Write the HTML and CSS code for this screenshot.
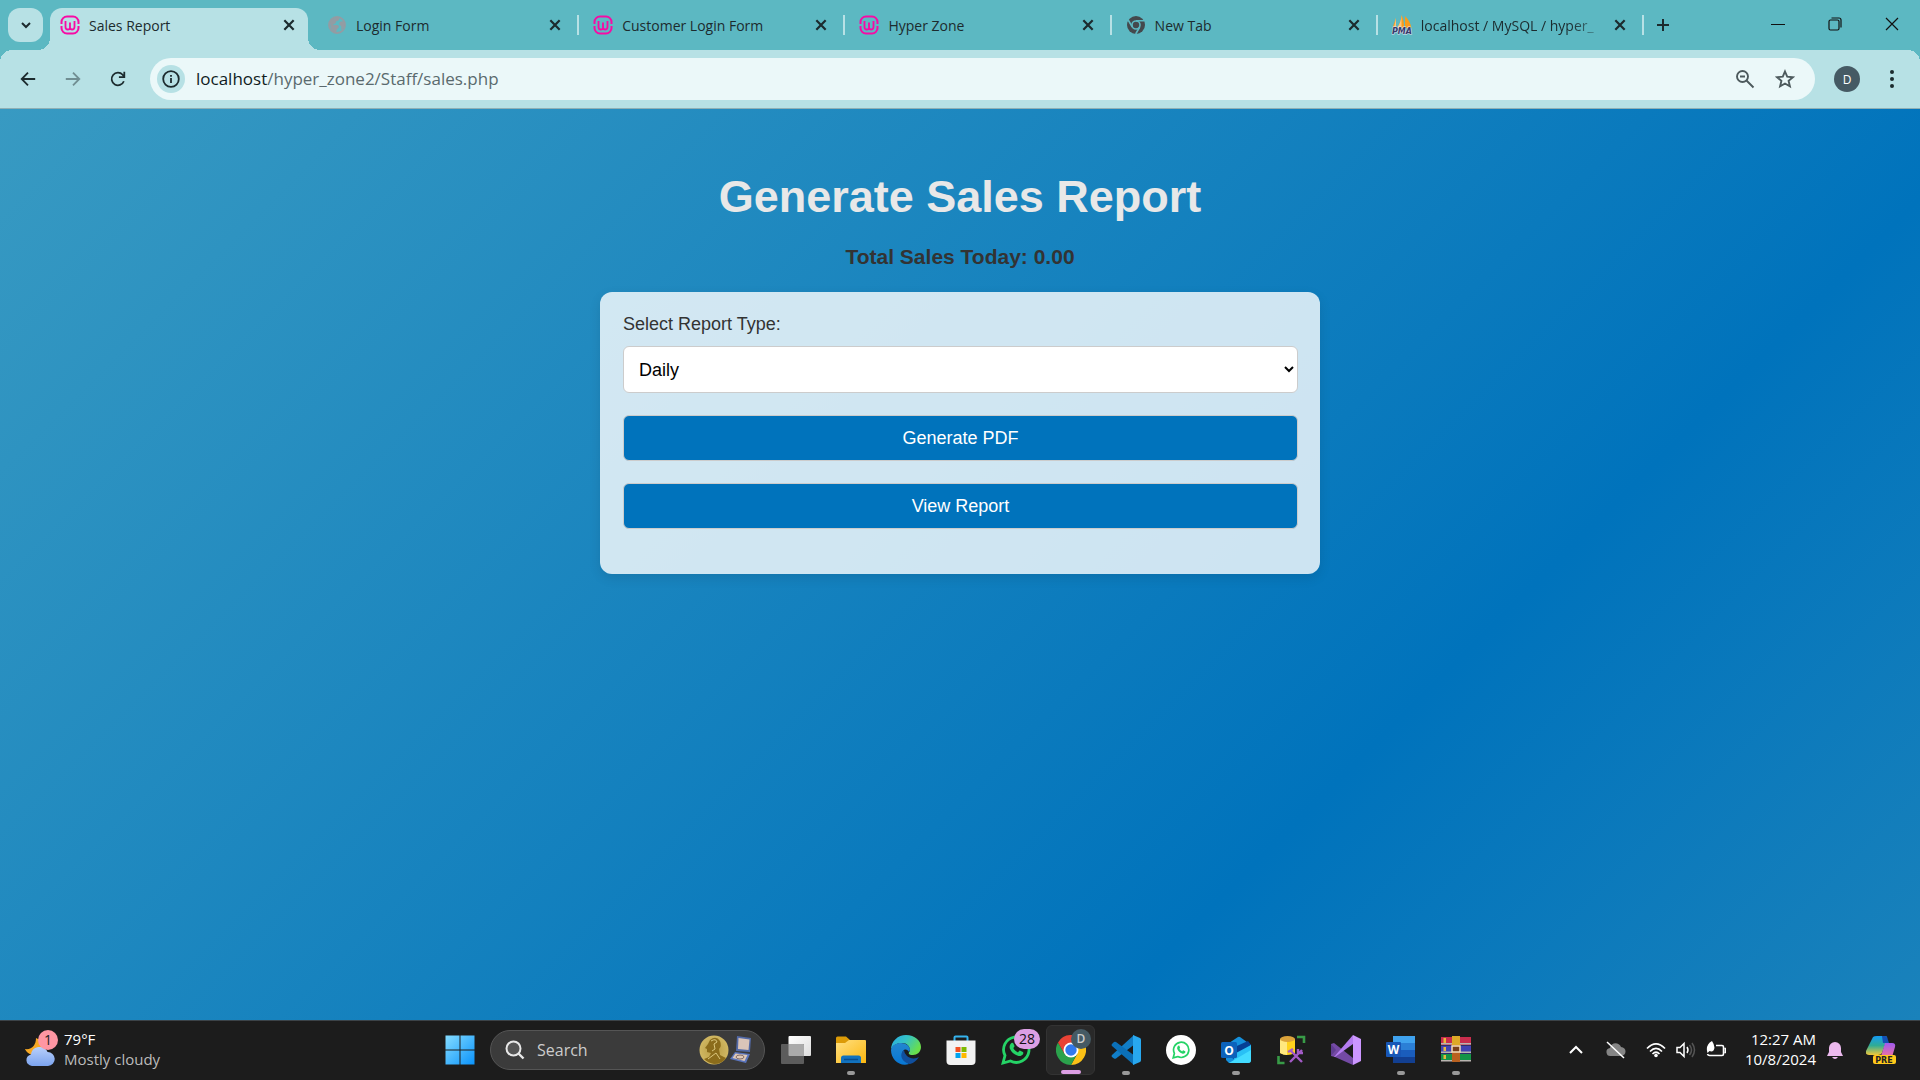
FILE: index.html
```html
<!DOCTYPE html>
<html lang="en">
<head>
<meta charset="utf-8">
<title>Sales Report</title>
<link rel="stylesheet" href="styles.css">
</head>
<body>
<svg class="defs" aria-hidden="true">
  <defs>
    <symbol id="wamp" viewBox="0 0 20 20"><g fill="none" stroke="#f70ba5" stroke-width="2"><path d="M1.500 9V7a5.500 5.500 0 0 1 5.500-5.500h6A5.500 5.500 0 0 1 18.500 7v2M1.500 11v2a5.500 5.500 0 0 0 5.500 5.500h6a5.500 5.500 0 0 0 5.500-5.500v-2"/><path d="M5.500 6v6q0 2.500 2.300 2.500T10 12.500V7.500M10 12.500q0 2 2.200 2t2.300-2.500V6" stroke-width="1.800"/></g></symbol>
    <symbol id="cross" viewBox="0 0 12 12"><path d="M2 2l8 8M10 2l-8 8" stroke="currentColor" stroke-width="1.900" fill="none"/></symbol>
    <symbol id="wa" viewBox="0 0 30 30"><path d="M2 28l2-7.500A12.700 12.700 0 1 1 9.500 26z" fill="none" stroke="#25d366" stroke-width="2.800"/><path d="M10.500 8c.7-.5 1.500-.4 1.900.5l1 2.300c.2.600 0 1-1.100 2.300 1 2 2.500 3.300 4.700 4.300 1.300-1.500 1.600-2 2.300-1.700l2.600 1.300c.7.400.5 1.800-.1 2.600-1 1.300-3 1.900-5 1.200-4-1.300-6.500-3.700-8-7.300-.6-2 .2-4.500 1.700-5.500z" fill="#25d366"/></symbol>
  </defs>
</svg>

<div class="screen">
<header class="tabstrip">
  <button class="tab-search" aria-label="Search tabs"><svg width="12" height="12" viewBox="0 0 12 12"><path d="M2 4l4 4 4-4" fill="none" stroke="currentColor" stroke-width="2"/></svg></button>
  <div class="tabs">
    <div class="tab active"><svg class="fav"><use href="#wamp"/></svg><span class="title">Sales Report</span><button class="close" aria-label="Close tab"><svg><use href="#cross"/></svg></button></div>
    <div class="tab"><svg class="fav" viewBox="0 0 20 20"><circle cx="10" cy="10" r="8" fill="none" stroke="#939ca3" stroke-width="1.800"/><path d="M3 7c2-4 6-5 9-4 1 2-1 3-3 3.500 0 2-1 2.500-3 2.500 0 1 1 1 4 1s2 3 0 4l-1 4c-3-1-6-4-6-11zM13 7c1-1 3-1 4 0 1 4 0 6-3 8 0-2 1-3 0-4s-3-2-1-4z" fill="#939ca3"/></svg><span class="title">Login Form</span><button class="close" aria-label="Close tab"><svg><use href="#cross"/></svg></button></div>
    <div class="tab"><svg class="fav"><use href="#wamp"/></svg><span class="title">Customer Login Form</span><button class="close" aria-label="Close tab"><svg><use href="#cross"/></svg></button></div>
    <div class="tab"><svg class="fav"><use href="#wamp"/></svg><span class="title">Hyper Zone</span><button class="close" aria-label="Close tab"><svg><use href="#cross"/></svg></button></div>
    <div class="tab"><svg class="fav" viewBox="0 0 20 20"><circle cx="10" cy="10" r="9" fill="#44494d"/><circle cx="10" cy="10" r="4" fill="none" stroke="#5cb8c2" stroke-width="1.600"/><path d="M10 5.800h8M6.300 12L2.200 5M13.700 12l-4 7" stroke="#5cb8c2" stroke-width="1.600"/></svg><span class="title">New Tab</span><button class="close" aria-label="Close tab"><svg><use href="#cross"/></svg></button></div>
    <div class="tab"><svg class="fav" viewBox="0 0 20 20"><path d="M4 3v10H0.500zM9.500 0q3 6 2.500 13H5q4-5 4.500-13zM13 1q5 5 6.500 12h-6.500z" fill="#f89c1c"/><path d="M4 3v10H2zM9.500 0v13H5q4-5 4.500-13z" fill="#fcc780"/><text x="10" y="19" text-anchor="middle" class="pma">PMA</text></svg><span class="title clipped">localhost / MySQL / hyper_</span><button class="close" aria-label="Close tab"><svg><use href="#cross"/></svg></button></div>
  </div>
  <button class="new-tab" aria-label="New tab"><svg width="14" height="14" viewBox="0 0 14 14"><path d="M7 1v12M1 7h12" stroke="currentColor" stroke-width="2"/></svg></button>
  <div class="window-controls">
    <button aria-label="Minimize"><svg width="14" height="14" viewBox="0 0 14 14"><path d="M0 7.500h14" stroke="#111"/></svg></button>
    <button aria-label="Restore"><svg width="14" height="14" viewBox="0 0 14 14"><g fill="none" stroke="#111" stroke-width="1.200"><rect x="1" y="3" width="10" height="10" rx="1.500"/><path d="M3.500 1H11q2 0 2 2v7.500"/></g></svg></button>
    <button aria-label="Close"><svg width="14" height="14" viewBox="0 0 14 14"><path d="M1 1l12 12M13 1L1 13" stroke="#111" stroke-width="1.200"/></svg></button>
  </div>
</header>

<nav class="toolbar">
  <button class="nav" aria-label="Back"><svg viewBox="0 0 20 20"><path d="M18 10H3M10 3l-7 7 7 7"/></svg></button>
  <button class="nav dim" aria-label="Forward"><svg viewBox="0 0 20 20"><path d="M2 10h15M10 3l7 7-7 7"/></svg></button>
  <button class="nav" aria-label="Reload"><svg viewBox="0 0 20 20"><path d="M16.500 12.500A7 7 0 1 1 15.200 5.300L17 7.200M17 2v6h-6"/></svg></button>
  <div class="omnibox">
    <button class="info" aria-label="Site information"><svg width="18" height="18" viewBox="0 0 18 18"><circle cx="9" cy="9" r="7.800" fill="none" stroke="#1c2b2e" stroke-width="1.800"/><path d="M9 8v5M9 5v1.700" stroke="#1c2b2e" stroke-width="1.800"/></svg></button>
    <div class="url"><span>localhost</span>/hyper_zone2/Staff/sales.php</div>
    <button class="tool" aria-label="Zoom"><svg width="20" height="20" viewBox="0 0 20 20"><circle cx="7.500" cy="7.500" r="5.500"/><path d="M11.500 11.500l7 7M5 7.500h5"/></svg></button>
    <button class="tool" aria-label="Bookmark this tab"><svg width="20" height="20" viewBox="0 0 20 20"><path d="M10 2.500l2.200 5.200 5.700.5-4.300 3.700 1.300 5.500-4.900-2.900-4.900 2.900 1.300-5.500-4.300-3.700 5.700-.5z"/></svg></button>
  </div>
  <button class="avatar" aria-label="Profile">D</button>
  <button class="menu" aria-label="Menu"><svg width="6" height="20" viewBox="0 0 6 20"><g fill="#1c2b2e"><circle cx="3" cy="3" r="2"/><circle cx="3" cy="10" r="2"/><circle cx="3" cy="17" r="2"/></g></svg></button>
</nav>

<main class="page">
  <h1>Generate Sales Report</h1>
  <h2>Total Sales Today: 0.00</h2>
  <form class="card">
    <label for="type">Select Report Type:</label>
    <select id="type"><option>Daily</option><option>Weekly</option><option>Monthly</option></select>
    <button type="button">Generate PDF</button>
    <button type="button">View Report</button>
  </form>
</main>

<footer class="taskbar">
  <button class="weather">
    <span class="weather-icon"><svg width="32" height="30" viewBox="0 0 32 30"><defs><linearGradient id="cl" x2="0" y2="1"><stop stop-color="#b9d0fb"/><stop offset="1" stop-color="#7ba3ee"/></linearGradient></defs><path d="M12 1c7 3 10 9 6 15L8 18C5 17 2 15 1 12c7 1 11-4 11-11z" fill="#f7a823"/><path d="M8 29a7 6 0 0 1-1-11.500C8 8 21 8 23.500 15A7 7 0 0 1 24 29z" fill="url(#cl)"/></svg><span class="count">1</span></span>
    <span class="weather-text"><span>79°F</span><span class="muted">Mostly cloudy</span></span>
  </button>
  <div class="apps">
    <button class="app" aria-label="Start"><svg viewBox="0 0 30 30"><defs><linearGradient id="win" x2="1" y2="1"><stop stop-color="#85dcff"/><stop offset="1" stop-color="#0a93fb"/></linearGradient></defs><path d="M.5.500h14v14H.5zM15.500.500h14v14h-14zM.5 15.500h14v14H.5zM15.500 15.500h14v14h-14z" fill="url(#win)"/></svg></button>
    <button class="search"><svg width="20" height="20" viewBox="0 0 20 20"><circle cx="8.500" cy="8.500" r="7" fill="#555" stroke="#e8e8e8" stroke-width="2"/><path d="M13.500 13.500l5 5" stroke="#e8e8e8" stroke-width="2.400"/></svg><span>Search</span>
      <svg class="medal" width="54" height="30" viewBox="0 0 54 30"><defs><radialGradient id="gold"><stop stop-color="#b79b43"/><stop offset="1" stop-color="#d0b762"/></radialGradient></defs><circle cx="15" cy="15" r="14.500" fill="url(#gold)"/><path d="M11 5q6-5 10 1 2 5-1 8l1 6 6 3q-4 6-12 6-6-1-10-5l5-2 2-4-4-1v-3l-2-1 3-4z" fill="#8b6c1b"/><path d="M12 6q5-3 6 1l-3 2 1 5-3 2M9 24l8-6 4 6" fill="none" stroke="#dbc77d"/><path d="M38 1l14 2-1 14-14-1z" fill="#5269a6"/><path d="M39.500 3l11 1.500-1 10.500-10.500-1z" fill="#dac5b9"/><path d="M36 17l15 2-4 9-16-4z" fill="#5b75bd"/><path d="M36.500 18.500l12 1.500-3 6-12-3z" fill="#dfc9b8"/><ellipse cx="41" cy="22" rx="4" ry="2" fill="none" stroke="#806b6b"/></svg></button>
    <button class="app" aria-label="Task view"><svg viewBox="0 0 30 30"><defs><linearGradient id="tv" x2="1" y2="1"><stop stop-color="#fff"/><stop offset="1" stop-color="#ddd"/></linearGradient></defs><rect x="7.500" y="1" width="22.500" height="20" rx="1" fill="url(#tv)"/><rect x="0" y="9" width="23" height="20" rx="1" fill="#5c5c5c"/><path d="M7.500 9H22q1 0 1 1v11H8.500q-1 0-1-1z" fill="#aaa"/></svg></button>
    <button class="app running" aria-label="File Explorer"><svg viewBox="0 0 30 30"><defs><linearGradient id="fo" x2="1" y2="1"><stop stop-color="#ffe082"/><stop offset="1" stop-color="#fbb70f"/></linearGradient></defs><path d="M0 3q0-1.500 1.500-1.500H10l4 3.500h8v6H0z" fill="#dc9b07"/><path d="M0 8h9l4-3h16q1 0 1 1v22H0z" fill="url(#fo)"/><path d="M5 28v-5q0-2.500 2.500-2.500h15q2.500 0 2.500 2.500v5z" fill="#1272be"/><path d="M8 24.500h14" stroke="#084d8f" stroke-width="1.500"/></svg></button>
    <button class="app" aria-label="Edge"><svg viewBox="0 0 30 30"><defs><linearGradient id="e1" y2=".5"><stop stop-color="#26a9e8"/><stop offset=".5" stop-color="#35c3c4"/><stop offset="1" stop-color="#69df4b"/></linearGradient><linearGradient id="e2" x2="0" y2="1"><stop stop-color="#2386cf"/><stop offset="1" stop-color="#0777d5"/></linearGradient></defs><path d="M0 15C0 6 7 0 15 0c9 0 15 6 15 12 0 5-4 8-8 8-5 0-5-2-3-4 0-5-3-8-8-8-6 0-10 3-11 7z" fill="url(#e1)"/><path d="M0 15C1 10 5 8 10 8c5 0 9 3 9 7l-1 2c-1-2-3-3-5-2-4 3-1 10 5 14-9 3-18-4-18-14z" fill="url(#e2)"/><path d="M13 15c-6 5-1 13 6 14 4-1 7-4 9-7-3 2-9 2-12-1q-3-3-3-6z" fill="#104f9d"/></svg></button>
    <button class="app" aria-label="Microsoft Store"><svg viewBox="0 0 30 30"><path d="M8.500 7V2.500q0-1 1-1h11q1 0 1 1V7" fill="none" stroke="#35b3ee" stroke-width="2"/><path d="M.5 5.500h29V26q0 4-4 4h-21q-4 0-4-4z" fill="#f2f2f2"/><path d="M9.500 12h5v5h-5z" fill="#f25022"/><path d="M15.500 12h5v5h-5z" fill="#7fba00"/><path d="M9.500 18h5v5h-5z" fill="#00a4ef"/><path d="M15.500 18h5v5h-5z" fill="#ffb900"/></svg></button>
    <button class="app" aria-label="WhatsApp"><svg><use href="#wa"/></svg><span class="badge">28</span></button>
    <button class="app current" aria-label="Chrome"><svg viewBox="0 0 30 30"><path d="M15 15L28 7.500A15 15 0 0 1 15 30L21.500 18.500z" fill="#fbc116"/><path d="M2 7.500L8.500 18.700 15 22.500 21 19 15 30A15 15 0 0 1 2 7.500z" fill="#2ba24c"/><path d="M2 7.500A15 15 0 0 1 28 7.500H15L8.500 18.700z" fill="#e94235"/><circle cx="15" cy="15" r="7.500" fill="#fff"/><circle cx="15" cy="15" r="5.700" fill="#3279ed"/></svg><span class="badge profile">D</span></button>
    <button class="app running" aria-label="Visual Studio Code"><svg viewBox="0 0 30 30"><path d="M23 0L1 20q-1 1 0 2l2 1.500q1 .5 2 0L24 9z" fill="#117ec7"/><path d="M23 30L1 11q-1-1 0-2l2-2q1-.5 2 0L24 21z" fill="#0b70b8"/><path d="M22 0l7 3q1 .5 1 2v20q0 1.500-1 2l-7 3z" fill="#28a8ef"/></svg></button>
    <button class="app" aria-label="WhatsApp Web"><svg viewBox="0 0 30 30"><circle cx="15" cy="15" r="15" fill="#fff"/><use href="#wa" x="6" y="6" width="18" height="18"/></svg></button>
    <button class="app running" aria-label="Outlook"><svg viewBox="0 0 30 30"><path d="M5 10L17 2q1-.5 2 0l11 8v15l-3 3H8l-3-3z" fill="#1590dc"/><path d="M9 14l18-8 3 4-18 14z" fill="#063f94"/><path d="M15 18l15-8v15q0 3-3 3H12z" fill="#29c0f5"/><path d="M8 28l22-13v10q0 3-3 3z" fill="#43dbff"/><rect y="7" width="16" height="16" rx="1.500" fill="#0c62bb"/><text x="8" y="20" text-anchor="middle" class="glyph">O</text></svg></button>
    <button class="app" aria-label="SQL Server Management Studio"><svg viewBox="0 0 30 30"><path d="M4 4v14q7 4 15 0V4z" fill="#ffd21c"/><path d="M4 4v14q3 2 7 2V4z" fill="#ffe880"/><ellipse cx="11.500" cy="4" rx="7.500" ry="3" fill="#dba33b"/><path d="M21 2h7v6M2.500 21v7h6" fill="none" stroke="#389b47" stroke-width="2.600"/><path d="M14 27l12-12M15 16l11 11M12 17l5-3M22 14v4h5" fill="none" stroke="#a35bc7" stroke-width="2.400"/></svg></button>
    <button class="app" aria-label="Visual Studio"><svg viewBox="0 0 30 30"><path d="M0 9l3-1 19 15v7L4 22l-4-1z" fill="#744aa5"/><path d="M0 9l5 6-5 6z" fill="#5f3d90"/><path d="M3 22L22 0v9L4 22z" fill="#b47cf0"/><path d="M22 0l8 4v22l-8 4z" fill="#cc96ff"/></svg></button>
    <button class="app running" aria-label="Word"><svg viewBox="0 0 30 30"><path d="M7 1h22v7H7z" fill="#3fa2ee"/><path d="M7 8h22v7H7z" fill="#2b7fd6"/><path d="M7 15h22v7H7z" fill="#1a5dbc"/><path d="M7 22h22v6H7z" fill="#123f91"/><rect y="7" width="15" height="15" rx="1" fill="#1857b6"/><text x="7.500" y="19" text-anchor="middle" class="glyph">W</text></svg></button>
    <button class="app running" aria-label="WinRAR"><svg viewBox="0 0 30 30"><path d="M0 2h30v8H0z" fill="#c92d4d"/><path d="M0 10.500h30v8H0z" fill="#4142b2"/><path d="M0 19h30v7H0z" fill="#149447"/><path d="M0 8h30v1.500H0zM0 16.500h30V18H0zM0 25h30v1.500H0z" fill="#b9b4b0"/><path d="M2.500 3h2.500v5H2.500zM2.500 12h2.500v4H2.500zM2.500 20h2.500v4H2.500z" fill="#e7b93c"/><path d="M11 1h8v26h-8z" fill="#b96120"/><path d="M11 1h8v9h-8z" fill="#dda928"/><path d="M11 11h8v6h-8z" fill="#79401b" stroke="#f4ddba" stroke-width="1.500"/></svg></button>
  </div>
  <div class="tray">
    <button aria-label="Hidden icons"><svg width="16" height="16" viewBox="0 0 16 16"><path d="M2 11l6-6 6 6" fill="none" stroke="#fff" stroke-width="2"/></svg></button>
    <button class="cloud" aria-label="OneDrive"><svg width="20" height="18" viewBox="0 0 20 18"><path d="M5 15a4 4 0 0 1-1-8C5 1 13 1 15 6c6 0 6 9 0 9z" fill="#858585"/><path d="M1 1l17 16" stroke="#fff" stroke-width="1.500"/></svg></button>
    <button class="status" aria-label="Network, sound and battery">
      <svg width="20" height="18" viewBox="0 0 20 18"><g fill="none" stroke="#fff" stroke-width="1.700"><path d="M1 7.500q9-9 18 0M4 10.500q6-6 12 0M6.500 13q3.500-3.500 7 0"/></g><circle cx="10" cy="14.500" r="1.800" fill="#fff"/></svg>
      <svg width="20" height="18" viewBox="0 0 20 18"><g fill="none" stroke="#fff" stroke-width="1.500"><path d="M1 6.500h3l4-4v13l-4-4H1zM11 6q2 3 0 6"/><path d="M13.500 4q4 5 0 10M16 2q5 7 0 14" stroke="#555"/></g></svg>
      <svg width="20" height="18" viewBox="0 0 20 18"><path d="M10 4.500h6q1.500 0 1.500 1.500v7q0 1.500-1.500 1.500H3.500q-1.500 0-2-1.500M18.500 7.500h1v4h-1" fill="none" stroke="#fff" stroke-width="1.600"/><path d="M1.500 12Q-1 4 6 0q4 6 1.500 9.500-1.500 1.500-4 .5z" fill="#fff"/></svg>
    </button>
    <button class="clock"><span>12:27 AM</span><span>10/8/2024</span></button>
    <button class="bell" aria-label="Notifications"><svg width="16" height="20" viewBox="0 0 16 20"><path d="M2 8a6 6 0 0 1 12 0v4l2 4H0l2-4zM5 17h6q-3 4-6 0z" fill="#ecb9ee"/></svg></button>
    <button class="copilot" aria-label="Copilot"><svg width="30" height="30" viewBox="0 0 30 30"><defs><linearGradient id="c1" x2="0" y2="1"><stop stop-color="#159bf4"/><stop offset=".5" stop-color="#2fac95"/><stop offset="1" stop-color="#f2c83b"/></linearGradient><linearGradient id="c2" x2="0" y2="1"><stop stop-color="#9f5af0"/><stop offset="1" stop-color="#f0729d"/></linearGradient></defs><path d="M7 2q1-1 4-1h8q3 0 2 3l-5 14q-1 2-4 2H3q-4 0-3-4z" fill="url(#c1)"/><path d="M16 1h3q2 0 3 4l1 3h-6z" fill="#134fb5"/><path d="M19 8h7q4 0 3 4l-3 10H12q3 0 4-4z" fill="url(#c2)"/><rect x="7" y="20" width="23" height="9" rx="2" fill="#ffc91a"/><text x="18" y="28" text-anchor="middle" class="pre">PRE</text></svg></button>
  </div>
</footer>
</div>
</body>
</html>
```
FILE: styles.css
```css
* { box-sizing: border-box; }
body {
  margin: 0;
  font-family: "Open Sans", "Noto Sans", sans-serif;
  color: #1c2b2e;
}
button {
  margin: 0;
  padding: 0;
  border: 0;
  background: none;
  color: inherit;
  font: inherit;
}
svg { display: block; flex: none; }
.defs { position: absolute; width: 0; height: 0; }
.screen { display: flex; flex-direction: column; min-height: 100vh; }

/* Tab strip */
.tabstrip {
  display: flex;
  height: 50px;
  background: #5cb8c2;
}
.tab-search {
  display: grid;
  place-items: center;
  flex: none;
  width: 35px;
  height: 34px;
  margin: 8px 7px 0 8px;
  border-radius: 12px;
  background: #b7e1e5;
}
.tabs { display: flex; flex: 0 1 1594px; min-width: 0; padding-top: 8px; }
.tab {
  position: relative;
  display: flex;
  flex: 1 1 0;
  align-items: center;
  min-width: 0;
  height: 42px;
  padding: 0 17px 8px 14px;
  font-size: 14px;
}
.tab:not(.active)::after {
  content: "";
  position: absolute;
  right: 0;
  top: 7px;
  width: 2px;
  height: 20px;
  background: #b7e1e5;
}
.tab.active {
  flex: 0 1 258px;
  margin-right: 5px;
  padding-right: 12px;
  padding-left: 10px;
  border-radius: 12px 12px 0 0;
  background: #b7e1e5;
}
.tab.active::before, .tab.active::after {
  content: "";
  position: absolute;
  bottom: 0;
  width: 12px;
  height: 12px;
}
.tab.active::before { left: -12px; background: radial-gradient(circle at 0 0, transparent 12px, #b7e1e5 12px); }
.tab.active::after { right: -12px; background: radial-gradient(circle at 100% 0, transparent 12px, #b7e1e5 12px); }
.fav { width: 20px; height: 20px; margin-right: 9px; overflow: visible; }
.title { flex: 1; overflow: hidden; white-space: nowrap; }
.clipped { -webkit-mask-image: linear-gradient(90deg, #000 78%, transparent 98%); mask-image: linear-gradient(90deg, #000 78%, transparent 98%); }
.close { width: 14px; height: 14px; }
.close svg { width: 14px; height: 14px; }
.new-tab { display: grid; place-items: center; width: 28px; height: 50px; margin-left: 5px; }
.window-controls { display: flex; margin-left: auto; }
.window-controls button { display: grid; place-items: center; width: 57px; height: 48px; }
.pma { font: italic bold 8px "DejaVu Sans", sans-serif; fill: #39396b; stroke: #dce4ee; stroke-width: 1px; paint-order: stroke; }

/* Address bar */
.toolbar {
  display: flex;
  align-items: center;
  height: 59px;
  padding: 0 14px 0 5px;
  border-bottom: 1px solid #8fb0b5;
  background:
    radial-gradient(circle at 12px 12px, #b7e1e5 12px, #5cb8c2 12px) left top / 12px 12px no-repeat,
    radial-gradient(circle at 0 12px, #b7e1e5 12px, #5cb8c2 12px) right top / 12px 12px no-repeat,
    #b7e1e5;
}
.nav { display: grid; place-items: center; width: 45px; height: 45px; }
.nav svg { width: 18px; height: 18px; fill: none; stroke: #1c2b2e; stroke-width: 2; }
.nav.dim { opacity: .45; }
.omnibox {
  display: flex;
  flex: 1;
  align-items: center;
  height: 42px;
  margin-left: 10px;
  padding: 0 20px 0 7px;
  border-radius: 21px;
  background: #ebf8f9;
}
.info { display: grid; place-items: center; width: 28px; height: 28px; border-radius: 50%; background: #b7e1e5; }
.url { flex: 1; margin-left: 11px; font-size: 17px; line-height: 24px; color: #5a6a6e; }
.url span { color: #101c1e; }
.tool { margin-left: 20px; }
.tool svg { fill: none; stroke: #4d5a5d; stroke-width: 1.9; }
.avatar { width: 26px; height: 26px; margin: 0 18px 0 19px; border-radius: 50%; background: #455a64; color: #fff; font-size: 12px; }
.menu { display: grid; place-items: center; width: 28px; height: 28px; }

/* Report page */
.page {
  flex: 1;
  padding-top: 62px;
  background: linear-gradient(135deg, #389ac2 0%, #0073bc 71%, #1a82bb 100%);
  font-family: "Liberation Sans", Arial, sans-serif;
  text-align: center;
}
h1 { margin: 0; color: #e8e8e8; font-size: 45px; line-height: 52px; }
h2 { margin: 22px 0 23px; color: #333; font-size: 21px; line-height: 24px; }
.card {
  display: flex;
  flex-direction: column;
  gap: 22px;
  width: 720px;
  max-width: 100%;
  margin: 0 auto;
  padding: 22px 22px 45px 23px;
  border-radius: 12px;
  background: rgba(255, 255, 255, .8);
  box-shadow: 0 4px 12px rgba(0, 0, 0, .1);
  color: #333;
  font-size: 18px;
  text-align: left;
}
.card label { margin-bottom: -10px; line-height: 20px; }
.card select {
  height: 47px;
  padding: 0 11px;
  border: 1px solid #ccc;
  border-radius: 6px;
  background: #fff;
  color: #000;
  font: inherit;
}
.card button {
  height: 46px;
  border: 1px solid #ccc;
  border-radius: 6px;
  background: #0073bc;
  color: #fff;
}

/* Taskbar */
.taskbar {
  display: grid;
  grid-template-columns: 1fr auto 1fr;
  align-items: center;
  height: 60px;
  background: #1c1c1c;
  box-shadow: inset 0 1px #3c4348;
  color: #fff;
  font-size: 15px;
}
.weather { display: flex; align-items: center; gap: 8px; margin-left: 24px; padding-bottom: 2px; text-align: left; line-height: 20px; }
.weather-icon { position: relative; padding-top: 6px; }
.count {
  position: absolute;
  left: 14px;
  top: -1px;
  width: 20px;
  height: 20px;
  border-radius: 50%;
  background: #ff96a3;
  color: #222;
  font-size: 14px;
  text-align: center;
}
.weather-text, .clock { display: flex; flex-direction: column; }
.muted { color: #bbb; }
.apps { display: flex; align-items: center; margin-right: 5px; }
.app { position: relative; display: grid; place-items: center; width: 55px; height: 50px; }
.app svg { width: 30px; height: 30px; }
.running::after, .current::after {
  content: "";
  position: absolute;
  bottom: 0;
  left: 50%;
  width: 8px;
  height: 4px;
  border-radius: 2px;
  background: #999;
  transform: translateX(-50%);
}
.current { width: 49px; margin: 0 3px; border: 1px solid #333; border-radius: 6px; background: #292929; }
.current::after { width: 20px; background: #dc9fe4; }
.badge {
  position: absolute;
  right: 3px;
  top: 4px;
  width: 26px;
  height: 20px;
  border-radius: 10px;
  background: #dc9fe4;
  color: #111;
  font-size: 14px;
  line-height: 20px;
}
.badge.profile { top: 3px; width: 20px; background: #455a64; color: #ccc; font-size: 12px; font-weight: 600; }
.search {
  display: flex;
  align-items: center;
  gap: 12px;
  width: 275px;
  height: 40px;
  margin: 0 3px;
  padding: 0 11px 0 14px;
  border: 1px solid #555;
  border-radius: 20px;
  background: #3b3b3b;
  color: #ccc;
  font-size: 16px;
}
.medal { margin-left: auto; }
.glyph { font: bold 12px "Open Sans", sans-serif; fill: #fff; }
.tray { display: flex; align-items: center; justify-content: flex-end; padding-right: 24px; }
.cloud { margin: 0 20px 0 22px; }
.status { display: flex; gap: 10px; }
.clock { width: 84px; margin-left: 6px; padding-bottom: 2px; text-align: right; line-height: 20px; }
.bell { margin-left: 11px; }
.copilot { margin-left: 23px; }
.pre { font: bold 8px "DejaVu Sans", sans-serif; fill: #222; }
```
